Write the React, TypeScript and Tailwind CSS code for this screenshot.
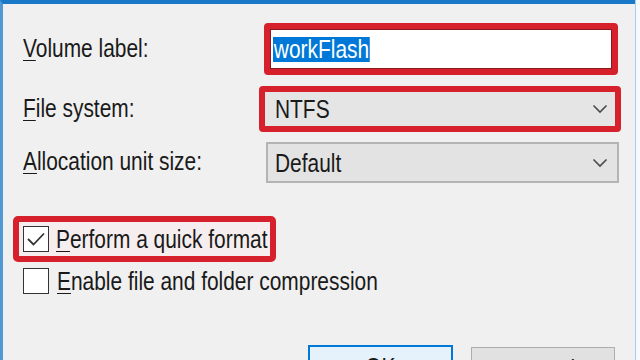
import { ReactNode } from "react";

const font = { fontFamily: '"Liberation Sans", Arial, sans-serif' };

function Chevron() {
  return (
    <svg width="16" height="10" viewBox="0 0 16 10" className="shrink-0">
      <path d="M1.5 1.5 L8 8 L14.5 1.5" fill="none" stroke="#4a4a4a" strokeWidth="1.6" />
    </svg>
  );
}

// the dialog font in the screenshot is tall and narrow, so squeeze Liberation Sans
function T({ children, center }: { children: ReactNode; center?: boolean }) {
  return (
    <span
      className={`inline-block whitespace-nowrap text-[25.5px] leading-[26px] scale-x-[0.82] ${
        center ? "origin-center" : "origin-left"
      }`}
    >
      {children}
    </span>
  );
}

function Key({ k, rest }: { k: string; rest: string }) {
  return (
    <T>
      <span className="underline decoration-1 underline-offset-[3px]">{k}</span>
      {rest}
    </T>
  );
}

function Checkbox({ checked }: { checked?: boolean }) {
  return (
    <div className="w-[26px] h-[26px] shrink-0 border-[1.5px] border-[#333] bg-white flex items-center justify-center">
      {checked && (
        <svg width="20" height="16" viewBox="0 0 20 16">
          <path d="M2 8 L7.5 13.5 L18 2.5" fill="none" stroke="#333" strokeWidth="1.8" />
        </svg>
      )}
    </div>
  );
}

export default function App() {
  return (
    <div className="w-[640px] h-[360px] overflow-hidden bg-[#f0f0f0] flex text-[#1a1a1a]" style={font}>
      <div className="flex-1 flex flex-col border-t-4 border-l-[3px] border-t-[#1a78c8] border-l-[#4f98d4] pl-[20px]">
        {/* Volume label */}
        <div className="flex items-center shrink-0 mt-[19px]">
          <div className="w-[241px] shrink-0">
            <Key k="V" rest="olume label:" />
          </div>
          <div className="w-[354px] h-[52px] border-[6px] border-[#d6202b] rounded-[4px]">
            <div className="h-full bg-white border border-[#8a1a22] flex items-center pl-[2px]">
              <span className="inline-block origin-left scale-x-[0.82] bg-[#0078d7] text-white text-[25.5px] leading-[25px] px-[1px] whitespace-nowrap">
                workFlash
              </span>
            </div>
          </div>
        </div>

        {/* File system */}
        <div className="flex items-center shrink-0 mt-[11px]">
          <div className="w-[236px] shrink-0">
            <Key k="F" rest="ile system:" />
          </div>
          <div className="w-[362px] h-[46px] border-[6px] border-[#d6202b] rounded-[4px]">
            <div className="h-full bg-[#e5e5e5] flex items-center justify-between pl-[10px] pr-[7px]">
              <T>NTFS</T>
              <Chevron />
            </div>
          </div>
        </div>

        {/* Allocation unit size */}
        <div className="flex items-center shrink-0 mt-[10px]">
          <div className="w-[243px] shrink-0">
            <Key k="A" rest="llocation unit size:" />
          </div>
          <div className="w-[353px] h-[41px] border-2 border-[#b4b4b4] bg-[#e3e3e3] flex items-center justify-between pl-[7px] pr-[9px]">
            <T>Default</T>
            <Chevron />
          </div>
        </div>

        {/* Checkboxes */}
        <div className="-ml-[10px] mt-[33px] shrink-0 w-[263px] h-[46px] border-[6px] border-[#d6202b] rounded-[5px] bg-[#f6eeee] flex items-center pl-[4px] gap-[7px]">
          <Checkbox checked />
          <Key k="P" rest="erform a quick format" />
        </div>
        <div className="flex items-center shrink-0 gap-[8px] mt-[6px]">
          <Checkbox />
          <Key k="E" rest="nable file and folder compression" />
        </div>

        {/* Buttons */}
        <div className="flex items-start shrink-0 gap-[18px] ml-[285px] mt-[51px]">
          <div className="w-[145px] h-[44px] shrink-0 border-2 border-[#0078d7] bg-[#e5f1fb] flex items-center justify-center">
            <T center>OK</T>
          </div>
          <div className="w-[144px] h-[44px] shrink-0 mt-[2px] border border-[#adadad] bg-[#e1e1e1] flex items-center justify-center">
            <T center>Cancel</T>
          </div>
        </div>
      </div>
      <div className="w-[5px] h-full border-l border-[#a9cdea] bg-[#f7fafd]" />
    </div>
  );
}
